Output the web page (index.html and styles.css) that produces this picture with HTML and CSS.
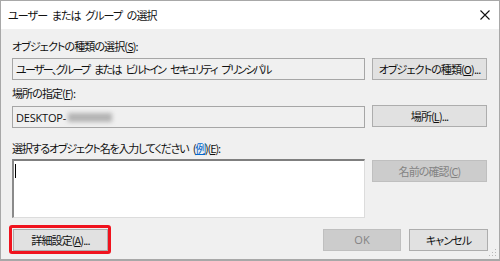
FILE: index.html
```html
<!DOCTYPE html>
<html lang="ja">
<head>
<meta charset="utf-8">
<title>ユーザー または グループ の選択</title>
<link rel="stylesheet" href="styles.css">
</head>
<body>
<div class="window">
  <div class="titlebar">
    <span class="title">ユーザー または グループ の選択</span>
    <svg class="close" width="10" height="10" viewBox="0 0 10 10"><path d="M0.5 0.5 L9.5 9.5 M9.5 0.5 L0.5 9.5" stroke="#111" stroke-width="1.1" fill="none"/></svg>
  </div>
  <div class="content">
    <div class="label l1">オブジェクトの種類の選択(<u>S</u>):</div>
    <div class="row r1">
      <div class="field"><span class="ftext">ユーザー、グループ または ビルトイン セキュリティ プリンシパル</span></div>
      <button class="btn">オブジェクトの種類(<u>O</u>)...</button>
    </div>
    <div class="label l2">場所の指定(<u>F</u>):</div>
    <div class="row r2">
      <div class="field"><span class="latin">DESKTOP-</span><span class="blur"></span></div>
      <button class="btn">場所(<u>L</u>)...</button>
    </div>
    <div class="label l3">選択するオブジェクト名を入力してください (<a class="link">例</a>)(<u>E</u>):</div>
    <div class="row r3">
      <div class="area"><span class="caret"></span></div>
      <button class="btn disabled">名前の確認(<u>C</u>)</button>
    </div>
    <div class="footer">
      <button class="btn adv">詳細設定(<u>A</u>)...</button>
      <div class="spacer"></div>
      <button class="btn disabled ok">OK</button>
      <button class="btn cancel">キャンセル</button>
    </div>
  </div>
  <svg class="grip" width="8" height="8" viewBox="0 0 8 8">
    <rect x="6" y="0" width="1" height="1" fill="#b8b8b8"/>
    <rect x="3" y="3" width="1" height="1" fill="#b8b8b8"/>
    <rect x="6" y="3" width="1" height="1" fill="#b8b8b8"/>
    <rect x="0" y="6" width="1" height="1" fill="#b8b8b8"/>
    <rect x="3" y="6" width="1" height="1" fill="#b8b8b8"/>
    <rect x="6" y="6" width="1" height="1" fill="#b8b8b8"/>
  </svg>
</div>
</body>
</html>
```
FILE: styles.css
```css
* { box-sizing: border-box; }
html, body { margin: 0; padding: 0; background: #fff; }
body {
  font-family: "Noto Sans CJK JP", "Noto Sans", sans-serif;
  font-size: 11px;
  letter-spacing: -0.9px;
  word-spacing: 3px;
  font-feature-settings: "palt";
  color: #111;
}
.window {
  position: relative;
  width: 500px;
  height: 261px;
  border: 1px solid #a8a8a8;
  border-bottom-width: 2px;
  background: #f0f0f0;
  display: flex;
  flex-direction: column;
}
.titlebar {
  height: 28px;
  background: #fff;
  display: flex;
  align-items: center;
  padding: 0 9px 1px 7px;
  flex: none;
}
.title { flex: 1; line-height: 16px; }
.close { display: block; }
.content {
  padding: 9px 11px 0 11px;
  display: flex;
  flex-direction: column;
}
.label { line-height: 16px; height: 16px; white-space: nowrap; }
.l2 { margin-top: 5px; }
.l3 { margin-top: 12px; letter-spacing: -1.2px; }
.row {
  display: grid;
  grid-template-columns: 353px 115px;
  column-gap: 7px;
  align-items: start;
}
.r1 { margin-top: 4px; }
.r2 { margin-top: 4px; }
.r3 { margin-top: 3px; }
.field {
  height: 22px;
  border: 1px solid #a6a6a6;
  background: #f0f0f0;
  padding: 0 3px;
  white-space: nowrap;
  overflow: hidden;
  display: flex;
  align-items: center;
}
.ftext { letter-spacing: -1.7px; word-spacing: 4px; }
.latin { font-family: "Open Sans", "Noto Sans", sans-serif; letter-spacing: -0.2px; font-size: 11px; }
.r2 .field { margin-top: 1px; }
.blur {
  display: inline-block;
  width: 44px;
  height: 9px;
  margin-left: 2px;
  background: #b4b4b4;
  filter: blur(2px);
}
.btn {
  font: inherit;
  letter-spacing: -0.9px;
  word-spacing: inherit;
  font-feature-settings: "palt";
  height: 22px;
  padding: 0;
  border: 1px solid #adadad;
  background: #e1e1e1;
  color: #111;
  line-height: 20px;
  white-space: nowrap;
}
.btn.disabled {
  background: #cccccc;
  border-color: #bfbfbf;
  color: #838383;
}
.r3 .btn { margin-top: 1px; }
.area {
  position: relative;
  height: 59px;
  background: #fff;
  border-top: 2px solid #7f7f7f;
  border-left: 2px solid #8a8a8a;
  border-right: 1px solid #dcdcdc;
  border-bottom: 1px solid #dcdcdc;
  padding: 3px 0 0 1px;
}
.caret {
  display: block;
  width: 1px;
  height: 14px;
  background: #000;
}
.link { color: #0066cc; text-decoration: underline; }
.footer {
  display: flex;
  margin-top: 11px;
  padding-left: 1px;
}
.spacer { flex: 1; }
.adv {
  width: 95px;
  position: relative;
}
.adv::after {
  content: "";
  position: absolute;
  left: -5px; top: -5px; right: -4px; bottom: -4px;
  border: 3px solid #f0131e;
  border-radius: 3px;
}
.ok { width: 78px; font-family: "Open Sans", sans-serif; letter-spacing: 0; }
.cancel { width: 79px; margin-left: 8px; }
.grip { position: absolute; right: 2px; bottom: 2px; }
u { text-decoration: underline; text-underline-offset: 1px; }
```
